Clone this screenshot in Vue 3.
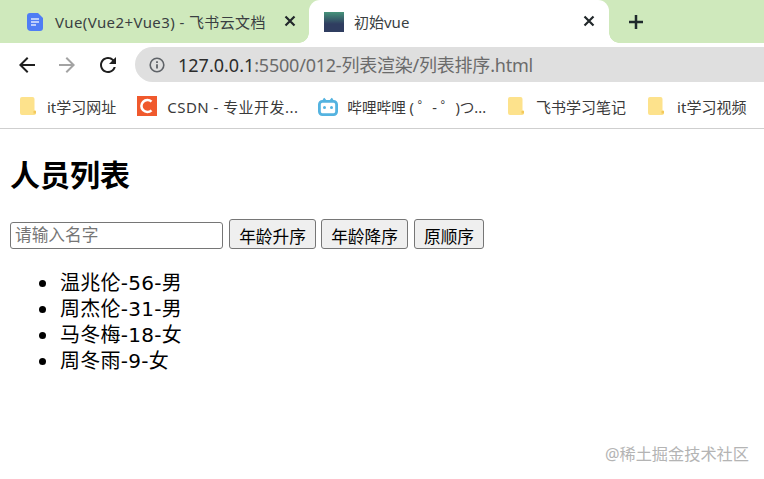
<script setup>
const people = ['温兆伦-56-男', '周杰伦-31-男', '马冬梅-18-女', '周冬雨-9-女']
</script>

<template>
  <div class="window">
    <div class="tabstrip">
      <div class="tab first">
        <svg class="doc" viewBox="0 0 16 18" width="16" height="18">
          <path d="M3 0h8l5 5v10a3 3 0 0 1-3 3H4a4 4 0 0 1-4-4V3a3 3 0 0 1 3-3z" fill="#4f7df5" />
          <path d="M4 6h8M4 9h8M4 12h5" stroke="#dfe8fd" stroke-width="1.5" fill="none" />
        </svg>
        <span class="tab-title first-title">Vue(Vue2+Vue3) - 飞书云文档</span>
        <svg class="close" viewBox="0 0 12 12" width="12" height="12">
          <path d="M1.5 1.5l9 9M10.500 1.500l-9 9" stroke="#22282b" stroke-width="2.200" fill="none" />
        </svg>
      </div>
      <div class="tab active">
        <span class="vue-icon"></span>
        <span class="tab-title active-title">初始vue</span>
        <svg class="close" viewBox="0 0 12 12" width="12" height="12">
          <path d="M1.5 1.5l9 9M10.500 1.500l-9 9" stroke="#22282b" stroke-width="2.200" fill="none" />
        </svg>
      </div>
      <svg class="plus" viewBox="0 0 16 16" width="16" height="16">
        <path d="M8 1v14M1 8h14" stroke="#1f2a2c" stroke-width="2.500" fill="none" />
      </svg>
    </div>

    <div class="toolbar">
      <svg class="nav back" viewBox="0 0 24 24" width="24" height="24">
        <path d="M20 11H7.830l5.590-5.590L12 4l-8 8 8 8 1.410-1.410L7.830 13H20v-2z" fill="#1f1f1f" />
      </svg>
      <svg class="nav forward" viewBox="0 0 24 24" width="24" height="24">
        <path d="M4 11h12.170l-5.590-5.590L12 4l8 8-8 8-1.410-1.410L16.170 13H4v-2z" fill="#a3a3a3" />
      </svg>
      <svg class="nav reload" viewBox="0 0 24 24" width="24" height="24">
        <path d="M17.650 6.350A7.958 7.958 0 0 0 12 4c-4.420 0-7.990 3.580-7.990 8s3.570 8 7.990 8c3.730 0 6.840-2.550 7.730-6h-2.080A5.990 5.990 0 0 1 12 18c-3.310 0-6-2.690-6-6s2.690-6 6-6c1.660 0 3.140.690 4.220 1.780L13 11h7V4l-2.350 2.350z" fill="#1f1f1f" />
      </svg>
      <div class="omnibox">
        <svg class="info" viewBox="0 0 16 16" width="16" height="16">
          <circle cx="8" cy="8" r="6.800" stroke="#5f6368" stroke-width="1.600" fill="none" />
          <path d="M8 7.200v4.300M8 4.300v1.700" stroke="#5f6368" stroke-width="1.800" fill="none" />
        </svg>
        <span class="url"><span class="host">127.0.0.1</span>:5500/012-列表渲染/列表排序.html</span>
      </div>
    </div>

    <div class="bookmarks">
      <div class="bookmark b1">
        <svg class="folder" viewBox="0 0 16 18" width="16" height="18">
          <path d="M2 0h10.500a2 2 0 0 1 2 2v11h.0a1.500 1.500 0 0 1 1.500 1.500V16a2 2 0 0 1-2 2H2a2 2 0 0 1-2-2V2a2 2 0 0 1 2-2z" fill="#fde28c" />
          <path d="M13.500 14h2.500v2.500h-2.500z" fill="#f3c95c" />
        </svg>
        <span>it学习网址</span>
      </div>
      <div class="bookmark b2">
        <svg viewBox="0 0 20 20" width="20" height="20">
          <rect width="20" height="20" fill="#f0592d" />
          <path d="M14.500 5.600A6 6 0 1 0 14.500 14.400" stroke="#fff" stroke-width="2.600" fill="none" />
        </svg>
        <span class="spaced">CSDN - 专业开发...</span>
      </div>
      <div class="bookmark b3">
        <svg viewBox="0 0 20 19" width="20" height="19">
          <path d="M5.500 1.500l2.500 3M14.500 1.500l-2.500 3" stroke="#54b3e0" stroke-width="2.200" fill="none" />
          <rect x="1.400" y="4.400" width="17.200" height="13.200" rx="3" stroke="#54b3e0" stroke-width="2.800" fill="#fff" />
          <circle cx="6.500" cy="10.500" r="1.500" fill="#54b3e0" />
          <circle cx="13.500" cy="10.500" r="1.500" fill="#54b3e0" />
        </svg>
        <span class="bili">哔哩哔哩 ( ゜- ゜)つ...</span>
      </div>
      <div class="bookmark b4">
        <svg class="folder" viewBox="0 0 16 18" width="16" height="18">
          <path d="M2 0h10.500a2 2 0 0 1 2 2v11h.0a1.500 1.500 0 0 1 1.500 1.500V16a2 2 0 0 1-2 2H2a2 2 0 0 1-2-2V2a2 2 0 0 1 2-2z" fill="#fde28c" />
          <path d="M13.500 14h2.500v2.500h-2.500z" fill="#f3c95c" />
        </svg>
        <span>飞书学习笔记</span>
      </div>
      <div class="bookmark b5">
        <svg class="folder" viewBox="0 0 16 18" width="16" height="18">
          <path d="M2 0h10.500a2 2 0 0 1 2 2v11h.0a1.500 1.500 0 0 1 1.500 1.500V16a2 2 0 0 1-2 2H2a2 2 0 0 1-2-2V2a2 2 0 0 1 2-2z" fill="#fde28c" />
          <path d="M13.500 14h2.500v2.500h-2.500z" fill="#f3c95c" />
        </svg>
        <span>it学习视频</span>
      </div>
    </div>

    <main class="page">
      <h2 class="heading">人员列表</h2>
      <div class="controls">
        <input class="name-input" type="text" placeholder="请输入名字" />
        <button class="btn wide" type="button">年龄升序</button>
        <button class="btn wide tight" type="button">年龄降序</button>
        <button class="btn narrow" type="button">原顺序</button>
      </div>
      <ul class="people">
        <li v-for="p in people" :key="p" class="person">{{ p }}</li>
      </ul>
      <div class="watermark">@稀土掘金技术社区</div>
    </main>
  </div>
</template>

<style>
html, body { margin: 0; background: #fff; }
</style>

<style scoped>
.window {
  width: 764px;
  height: 479px;
  overflow: hidden;
  font-family: "Noto Sans", "Noto Sans CJK SC", sans-serif;
  color: #000;
  background: #fff;
}
.tabstrip {
  display: flex;
  align-items: stretch;
  height: 43px;
  background: #cfe9bc;
}
.tab {
  display: flex;
  align-items: center;
  box-sizing: border-box;
  flex: none;
  position: relative;
}
.first { width: 309px; padding-left: 27px; }
.active {
  width: 300px;
  padding-left: 15px;
  background: #fff;
  border-radius: 11px 11px 0 0;
}
.active::before,
.active::after {
  content: "";
  position: absolute;
  bottom: 0;
  width: 10px;
  height: 10px;
}
.active::before {
  left: -10px;
  background: radial-gradient(circle at 0 0, transparent 9.500px, #fff 10px);
}
.active::after {
  right: -10px;
  background: radial-gradient(circle at 100% 0, transparent 9.500px, #fff 10px);
}
.tab-title {
  font-size: 15px;
  color: #3a3f42;
  white-space: nowrap;
}
.first-title { margin-left: 12px; width: 229px; letter-spacing: 0.4px; }
.doc { flex: none; }
.vue-icon {
  flex: none;
  width: 20px;
  height: 20px;
  background: linear-gradient(#46937a, #2f3d60 60%);
}
.active-title { margin-left: 10px; width: 229px; }
.close { flex: none; margin-top: -1px; }
.plus { flex: none; margin-left: 19px; align-self: center; }

.toolbar {
  display: flex;
  align-items: center;
  height: 43px;
  box-sizing: border-box;
  padding: 0 0 0 15px;
}
.nav { flex: none; }
.forward { margin-left: 16px; }
.reload { margin-left: 17px; }
.omnibox {
  flex: none;
  display: flex;
  align-items: center;
  width: 660px;
  height: 35px;
  margin-left: 15px;
  padding-left: 14px;
  border-radius: 18px;
  background: #dfdfdf;
}
.info { flex: none; }
.url {
  margin: -2px 0 0 13px;
  font-size: 18px;
  letter-spacing: -0.22px;
  color: #6b6b6b;
  white-space: nowrap;
}
.host { color: #2c2c2c; letter-spacing: 0; }

.bookmarks {
  display: flex;
  align-items: center;
  height: 43px;
  box-sizing: border-box;
  padding-bottom: 2px;
  border-bottom: 1px solid #cfcfcf;
  font-size: 15px;
  color: #3a3a3a;
}
.bookmark {
  display: flex;
  align-items: center;
  flex: none;
  white-space: nowrap;
}
.bookmark svg { flex: none; }
.spaced { letter-spacing: 0.45px; }
.bili { font-size: 14.600px; }
.b1 { margin-left: 20px; gap: 11px; }
.b2 { margin-left: 21px; gap: 10px; }
.b3 { margin-left: 20px; gap: 9px; }
.b4 { margin-left: 22px; gap: 12px; }
.b5 { margin-left: 22px; gap: 13px; }

.page {
  position: relative;
  height: 350px;
  padding: 0 10px;
}
.heading {
  margin: 0;
  padding-top: 26px;
  font-size: 30px;
  line-height: 40px;
  font-weight: 700;
}
.controls {
  display: flex;
  align-items: flex-end;
  gap: 6px;
  margin-top: 24px;
}
.name-input {
  box-sizing: border-box;
  width: 213px;
  height: 27px;
  margin: 0;
  padding: 0 4px 2px;
  border: 1px solid #767676;
  border-radius: 3px;
  font: 16.700px "Noto Sans", "Noto Sans CJK SC", sans-serif;
  background: #fff;
}
.name-input::placeholder { color: #767676; opacity: 1; }
.btn {
  box-sizing: border-box;
  height: 30px;
  margin: 0;
  padding: 3px 0 0;
  border: 1px solid #767676;
  border-radius: 3px;
  background: #efefef;
  font: 16.700px "Noto Sans", "Noto Sans CJK SC", sans-serif;
  color: #000;
}
.wide { width: 87px; }
.tight { margin-left: -1px; }
.narrow { width: 70px; }
.people {
  margin: 21px 0 0;
  padding: 0 0 0 50px;
  list-style: none;
  font-family: "DejaVu Sans", "Noto Sans CJK SC", sans-serif;
  font-size: 20px;
  line-height: 26px;
  letter-spacing: 0.25px;
}
.person {
  position: relative;
}
.person::before {
  content: "";
  position: absolute;
  left: -21.500px;
  top: 10px;
  width: 7px;
  height: 7px;
  border-radius: 50%;
  background: #000;
}
.watermark {
  position: absolute;
  right: 15px;
  top: 313px;
  font-size: 16.200px;
  line-height: 24px;
  color: #b4b4b4;
}
</style>
